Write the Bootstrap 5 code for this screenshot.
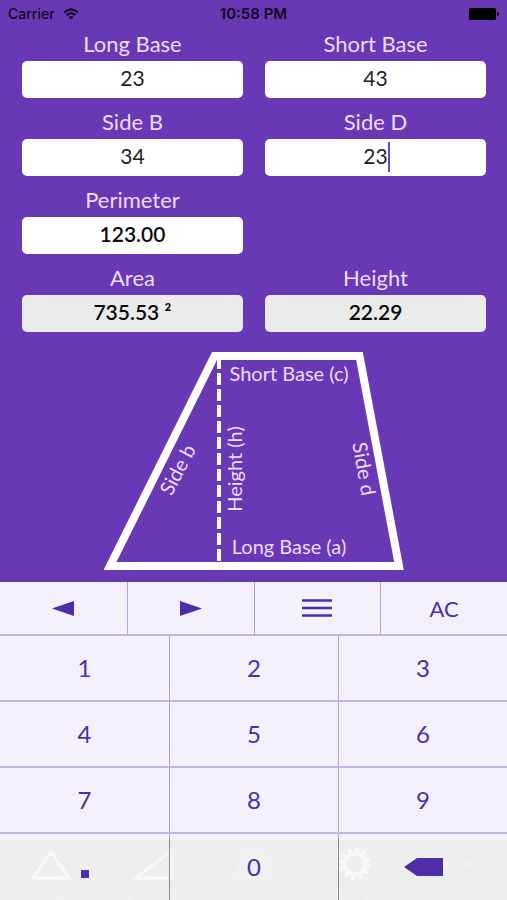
<!DOCTYPE html>
<html lang="en">
<head>
<meta charset="utf-8">
<meta name="viewport" content="width=device-width, initial-scale=1">
<title>Trapezoid</title>
<link href="https://cdn.jsdelivr.net/npm/bootstrap@5.3.0/dist/css/bootstrap.min.css" rel="stylesheet">
<style>
  body { background: #6938b4; font-family: Lato, "Open Sans", sans-serif; }
  .statusbar { height: 28px; padding: 0 8px; color: #14081f; font: 500 14px/28px Inter, Roboto, sans-serif; }
  .clock { font-size: 15px; }
  .fields { display: grid; grid-template-columns: 1fr 1fr; column-gap: 22px; row-gap: 9px; padding: 1px 21px 0 22px; }
  .fields label { display: block; height: 32px; color: #ecdcff; font-size: 22px; line-height: 30px; text-align: center; }
  .fields input { height: 37px; padding: 0 0 4px; border: 0; border-radius: 5px; color: #222; font-size: 21px; line-height: 33px; text-align: center; }
  .fields input.strong { color: #0c0c0c; font-weight: 600; }
  .fields input[readonly] { background: #eaeaea; }
  .caret { left: calc(50% + 12px); top: 3px; width: 2px; height: 30px; background: #6a45bd; }
  .diagram { width: 300px; max-width: 100%; margin-top: 20px; overflow: visible; }
  .diagram text { fill: #ecdcff; font-size: 20px; text-anchor: middle; }
  .keypad { background: #f4f0fb; }
  .key { display: flex; align-items: center; justify-content: center; border: 0 solid #b3a4de; border-left-width: 1px; border-radius: 0; background: none; color: #4d2ea8; font-size: 24px; padding: 0; }
  .key:first-of-type { border-left-width: 0; }
  .keyrow { display: grid; grid-template-columns: repeat(3, 1fr); height: 66px; position: relative; }
  .keyrow.tools { grid-template-columns: repeat(4, 1fr); height: 54px; }
  .keyrow:not(:last-child) { border-bottom: 2px solid #c1b5e5; }
  .tools .key { font-size: 22px; }
  .keyrow.final .key { z-index: 1; }
  .keyrow.final .key:not(:first-of-type) { border-image: linear-gradient(#b3a4de 6px, #8b8b8b 6px) 1; }
  .tabs { inset: 6px 0 0 0; background: #eeeeee; overflow: hidden; }
  .tabs a { flex: 1 1 0; color: #f3f2f3; font-size: 12px; line-height: 12px; text-decoration: none; text-align: center; white-space: nowrap; padding-top: 6px; }
  .tabs svg { display: block; margin: 0 auto 4px; }
</style>
</head>
<body>
<div class="d-flex flex-column min-vh-100">
  <header class="statusbar row g-0">
    <div class="col d-flex align-items-center gap-2"><span>Carrier</span>
      <svg width="16" height="12" viewBox="0 0 16 12" fill="none" stroke="#14081f" stroke-width="2" aria-hidden="true"><path d="M1 4.600Q8-1.800 15 4.600M3.500 7.200Q8 3.200 12.500 7.200"/><path d="M5.500 9Q8 7 10.500 9L8 11.500z" fill="#14081f" stroke="none"/></svg>
    </div>
    <div class="clock col-auto fw-semibold">10:58 PM</div>
    <div class="col d-flex align-items-center justify-content-end">
      <svg width="30" height="12" viewBox="0 0 30 12" aria-label="Battery full"><rect width="27" height="12" rx="1.500"/><path d="M28 4q2 0 2 2t-2 2z"/></svg>
    </div>
  </header>

  <main class="flex-grow-1">
    <form class="fields">
      <div><label for="a">Long Base</label><input class="form-control" id="a" value="23"></div>
      <div><label for="c">Short Base</label><input class="form-control" id="c" value="43"></div>
      <div><label for="b">Side B</label><input class="form-control" id="b" value="34"></div>
      <div><label for="d">Side D</label><div class="position-relative"><input class="form-control" id="d" value="23"><span class="caret position-absolute"></span></div></div>
      <div><label for="p">Perimeter</label><input class="form-control strong" id="p" value="123.00"></div>
      <div></div>
      <div><label for="area">Area</label><input class="form-control strong" id="area" value="735.53 ²" readonly></div>
      <div><label for="h">Height</label><input class="form-control strong" id="h" value="22.29" readonly></div>
    </form>
    <svg class="diagram d-block mx-auto" viewBox="0 0 300 218" role="img" aria-label="Trapezoid with labelled sides">
      <path d="M110.500 4H255.500L295 214H6z" fill="none" stroke="#fff" stroke-width="8"/>
      <path d="M115 8V210" stroke="#fff" stroke-width="4" stroke-dasharray="12 4" stroke-dashoffset="3"/>
      <text x="185" y="29">Short Base (c)</text>
      <text x="185" y="202">Long Base (a)</text>
      <text transform="translate(138 117) rotate(-90)">Height (h)</text>
      <text transform="translate(80 121) rotate(-62)">Side b</text>
      <text transform="translate(253 118) rotate(80)">Side d</text>
    </svg>
  </main>

  <section class="keypad" aria-label="Keypad">
    <div class="keyrow tools">
      <button class="btn key" type="button" aria-label="Previous field"><svg width="22" height="15" viewBox="0 0 22 15" fill="#4d2ea8"><path d="M0 7.500L22 0V15z"/></svg></button>
      <button class="btn key" type="button" aria-label="Next field"><svg width="22" height="15" viewBox="0 0 22 15" fill="#4d2ea8"><path d="M22 7.500L0 0V15z"/></svg></button>
      <button class="btn key" type="button" aria-label="Menu"><svg width="30" height="18" viewBox="0 0 30 18" stroke="#4d2ea8" stroke-width="2.500"><path d="M0 1.500H30M0 9H30M0 16.500H30"/></svg></button>
      <button class="btn key" type="button">AC</button>
    </div>
    <div class="keyrow"><button class="btn key" type="button">1</button><button class="btn key" type="button">2</button><button class="btn key" type="button">3</button></div>
    <div class="keyrow"><button class="btn key" type="button">4</button><button class="btn key" type="button">5</button><button class="btn key" type="button">6</button></div>
    <div class="keyrow"><button class="btn key" type="button">7</button><button class="btn key" type="button">8</button><button class="btn key" type="button">9</button></div>
    <div class="keyrow final">
      <nav class="tabs position-absolute d-flex" aria-label="Shapes">
        <a href="#"><svg width="44" height="38" viewBox="0 0 44 38" fill="none" stroke="#f8f8f8" stroke-width="3"><path d="M22 6L40 32H4z"/></svg>Triangle</a>
        <a href="#"><svg width="44" height="38" viewBox="0 0 44 38" fill="none" stroke="#f8f8f8" stroke-width="3"><path d="M41 5V32H6z"/></svg>Right Triangle</a>
        <a href="#"><svg width="44" height="38" viewBox="0 0 44 38" fill="#f0eff2"><path d="M12 3H36L44 33H0z"/></svg>&nbsp;</a>
        <a href="#"><svg width="44" height="38" viewBox="0 0 44 38" fill="none" stroke="#f8f8f8"><circle cx="22" cy="18" r="10.500" stroke-width="4"/><circle cx="22" cy="18" r="14" stroke-width="4" stroke-dasharray="3.660 3.660"/></svg>Settings</a>
        <a href="#"><svg width="44" height="38" viewBox="0 0 44 38" fill="none" stroke="#f3f3f3" stroke-width="2"><circle cx="12" cy="18" r="2"/><circle cx="22" cy="18" r="2"/><circle cx="32" cy="18" r="2"/></svg>More</a>
      </nav>
      <button class="btn key position-relative" type="button" aria-label="Decimal point"><svg width="8" height="24" viewBox="0 0 8 24" fill="#4d2ea8"><path d="M0 15H8V23H0z"/></svg></button>
      <button class="btn key position-relative" type="button">0</button>
      <button class="btn key position-relative" type="button" aria-label="Delete"><svg width="39" height="18" viewBox="0 0 39 18" fill="#4d2ea8"><path d="M0 9L13 0H39V18H13z"/></svg></button>
    </div>
  </section>
</div>
<script src="https://cdn.jsdelivr.net/npm/bootstrap@5.3.0/dist/js/bootstrap.bundle.min.js"></script>
</body>
</html>
